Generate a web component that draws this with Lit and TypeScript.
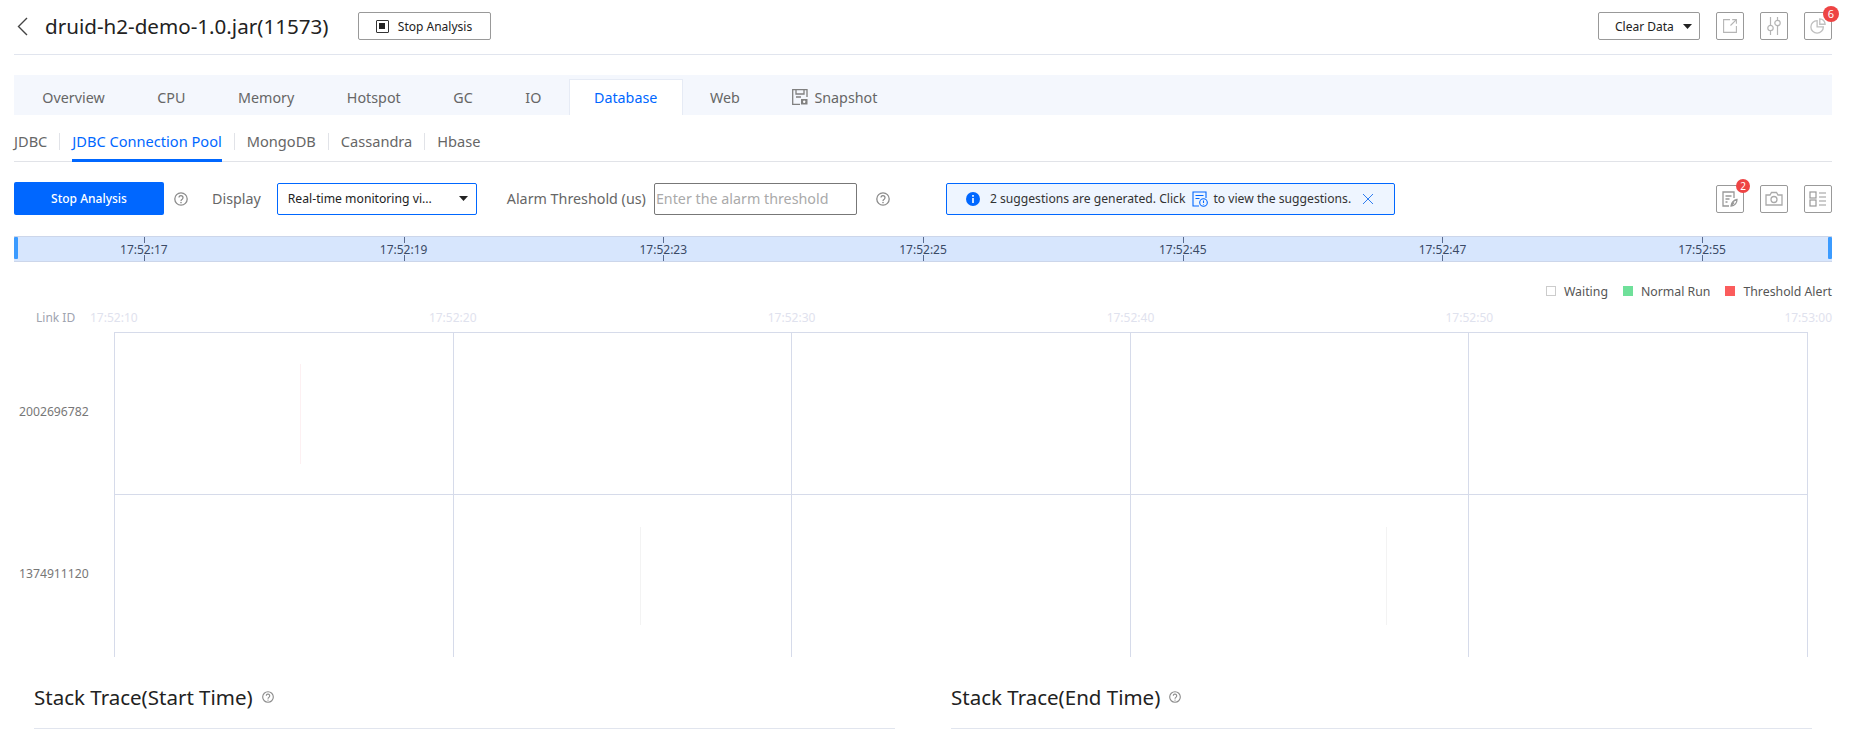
import { LitElement, html, css } from 'lit';
import { customElement } from 'lit/decorators.js';

const helpIcon = (size: number) => html`<svg class="help" width=${size} height=${size} viewBox="0 0 14 14" fill="none" stroke="#8c8c8c">
  <circle cx="7" cy="7" r="6.2" stroke-width="1.3"></circle>
  <path d="M5 5.6a2 2 0 1 1 3.2 1.6c-.8.5-1.2.9-1.2 1.7" stroke-width="1.3"></path>
  <circle cx="7" cy="10.6" r=".8" fill="#8c8c8c" stroke="none"></circle>
</svg>`;

const caret = html`<svg width="9" height="5" viewBox="0 0 9 5"><path d="M0 0h9L4.500 5z" fill="#222"></path></svg>`;

// chart data: faint marks in the swimlanes, in px from the left of the cell
const rows = [
  { id: '2002696782', marks: [{ cell: 0, left: 185, top: 31, height: 100, color: '#fdf0f2' }] },
  {
    id: '1374911120',
    marks: [
      { cell: 1, left: 186, top: 32, height: 98, color: '#f3f3f3' },
      { cell: 3, left: 255, top: 32, height: 98, color: '#f3f3f3' },
    ],
  },
];

const tabs = ['Overview', 'CPU', 'Memory', 'Hotspot', 'GC', 'IO', 'Database', 'Web'];
const subTabs = ['JDBC', 'JDBC Connection Pool', 'MongoDB', 'Cassandra', 'Hbase'];
const slices = ['17:52:17', '17:52:19', '17:52:23', '17:52:25', '17:52:45', '17:52:47', '17:52:55'];
const axis = ['17:52:10', '17:52:20', '17:52:30', '17:52:40', '17:52:50', '17:53:00'];

@customElement('app-root')
export class AppRoot extends LitElement {
  static styles = css`
    :host {
      display: block;
      width: 1857px;
      height: 735px;
      overflow: hidden;
      box-sizing: border-box;
      padding: 0 25px 0 14px;
      background: #fff;
      font-family: 'Noto Sans', 'Noto Sans CJK SC', sans-serif;
      color: #555;
    }
    svg {
      display: block;
      flex: none;
    }
    .header {
      display: flex;
      align-items: center;
      box-sizing: border-box;
      height: 55px;
      padding-bottom: 2px;
      border-bottom: 1px solid #e1e5ee;
    }
    .back {
      margin-left: 3px;
      margin-right: 17px;
    }
    .title {
      font-size: 20.6px;
      color: #222;
      margin-right: 29px;
      white-space: nowrap;
    }
    .btn {
      display: flex;
      align-items: center;
      justify-content: center;
      box-sizing: border-box;
      height: 28px;
      border: 1px solid #999;
      border-radius: 2px;
      font-size: 12px;
      color: #222;
      background: #fff;
    }
    .stop {
      width: 133px;
      gap: 9px;
    }
    .stop-box {
      width: 13px;
      height: 13px;
      border: 1px solid #333;
      box-sizing: border-box;
      display: flex;
      align-items: center;
      justify-content: center;
      border-radius: 1px;
    }
    .stop-box i {
      width: 6px;
      height: 6px;
      background: #222;
    }
    .spacer {
      flex: 1;
    }
    .clear {
      width: 102px;
      gap: 9px;
      padding-left: 16px;
      justify-content: flex-start;
    }
    .icon-btn {
      position: relative;
      width: 28px;
      height: 28px;
      margin-left: 16px;
    }
    .badge {
      position: absolute;
      top: -7px;
      right: -8px;
      width: 16px;
      height: 16px;
      border-radius: 50%;
      background: #ee4444;
      color: #fff;
      font-size: 11px;
      line-height: 16px;
      text-align: center;
    }
    .badge.small {
      width: 14px;
      height: 14px;
      line-height: 14px;
      font-size: 10px;
      top: -7px;
      right: -7px;
    }
    .tabs {
      display: flex;
      height: 40px;
      margin-top: 20px;
      padding-left: 2px;
      background: #f4f7fd;
      font-size: 14.3px;
      color: #666;
    }
    .tab {
      display: flex;
      align-items: center;
      gap: 6px;
      padding: 0 26.3px;
      margin-top: 4px;
      height: 36px;
      box-sizing: border-box;
    }
    .tab.active {
      background: #fff;
      color: #0067ff;
      padding: 0 24.3px;
      margin: 4px 1px 0;
      border: 1px solid #e6ebf5;
      border-bottom: none;
    }
    .subtabs {
      display: flex;
      align-items: stretch;
      box-sizing: border-box;
      height: 47px;
      border-bottom: 1px solid #e1e3e8;
      font-size: 14.6px;
      color: #666;
    }
    .subtab {
      display: flex;
      align-items: center;
      position: relative;
      margin-right: 25px;
      margin-bottom: -1px;
      border-bottom: 3px solid transparent;
      padding-top: 7px;
    }
    .subtab.active {
      color: #0067ff;
      border-bottom-color: #0067ff;
    }
    .subtab:not(:last-child)::after {
      content: '';
      position: absolute;
      right: -13px;
      top: 18px;
      height: 17px;
      width: 1px;
      background: #e1e3e8;
    }
    .toolbar {
      display: flex;
      align-items: center;
      height: 33px;
      margin-top: 20px;
      font-size: 14.3px;
      color: #666;
    }
    .primary {
      width: 150px;
      height: 33px;
      border: none;
      background: #0067ff;
      color: #fff;
      font-weight: 500;
      border-radius: 2px;
    }
    .toolbar .help {
      margin-left: 10px;
    }
    .display-label {
      margin-left: 24px;
      margin-right: 16px;
    }
    .select {
      display: flex;
      align-items: center;
      justify-content: space-between;
      box-sizing: border-box;
      width: 200px;
      height: 32px;
      padding: 0 8px 0 10px;
      border: 1px solid #0067ff;
      border-radius: 2px;
      font-size: 12.2px;
      color: #222;
    }
    .alarm-label {
      margin-left: 30px;
      margin-right: 8px;
      white-space: nowrap;
    }
    .input {
      box-sizing: border-box;
      width: 203px;
      height: 32px;
      padding-left: 1px;
      border: 1px solid #777;
      border-radius: 2px;
      line-height: 30px;
      color: #aaa;
      white-space: nowrap;
    }
    .toolbar .input + .help {
      margin-left: 19px;
    }
    .notice {
      display: flex;
      align-items: center;
      box-sizing: border-box;
      width: 449px;
      height: 32px;
      margin-left: 56px;
      padding-left: 19px;
      border: 1px solid #0067ff;
      border-radius: 2px;
      background: #eef5ff;
      font-size: 12.15px;
      color: #333;
      white-space: nowrap;
    }
    .notice .info {
      margin-right: 10px;
    }
    .notice .doc {
      margin: 0 5px 0 7px;
    }
    .notice .close {
      margin-left: 11px;
    }
    .timeline {
      display: flex;
      height: 26px;
      margin-top: 21px;
      position: relative;
      box-sizing: border-box;
      background: #d7e6fd;
      border-top: 1px solid #ccd6ea;
      border-bottom: 1px solid #ccd6ea;
      font-size: 12px;
      color: #3a4a66;
    }
    .slice {
      flex: 1;
      display: flex;
      align-items: center;
      justify-content: center;
      position: relative;
    }
    .slice::before,
    .slice::after {
      content: '';
      position: absolute;
      left: 50%;
      width: 1px;
      height: 6px;
      background: #5a6b8f;
    }
    .slice::before {
      top: 0;
    }
    .slice::after {
      bottom: 0;
    }
    .handle {
      position: absolute;
      top: 0;
      width: 4px;
      height: 22px;
      background: #3b9bff;
      border-radius: 1px;
    }
    .handle.left {
      left: 0;
    }
    .handle.right {
      right: 0;
    }
    .legend {
      display: flex;
      justify-content: flex-end;
      align-items: center;
      height: 18px;
      margin-top: 20px;
      font-size: 12.3px;
      color: #555;
    }
    .legend-item {
      display: flex;
      align-items: center;
      gap: 8px;
      margin-left: 15px;
    }
    .swatch {
      width: 10px;
      height: 10px;
      box-sizing: border-box;
    }
    .swatch.wait {
      border: 1px solid #ccc;
      background: #fff;
    }
    .swatch.run {
      background: #6fe09a;
    }
    .swatch.alert {
      background: #fb5c5c;
    }
    .axis {
      display: flex;
      align-items: center;
      height: 20px;
      margin-top: 7px;
      margin-bottom: 5px;
      font-size: 12px;
    }
    .link-id {
      width: 76px;
      box-sizing: border-box;
      padding-left: 22px;
      color: #a0a4b0;
      white-space: nowrap;
    }
    .axis-labels {
      flex: 1;
      display: flex;
      justify-content: space-between;
      color: #dfe2ee;
    }
    .row {
      display: flex;
      height: 162px;
      font-size: 12.2px;
      color: #777;
    }
    .row.last {
      height: 163px;
    }
    .row-label {
      width: 100px;
      box-sizing: border-box;
      padding: 0 0 4px 5px;
      align-self: center;
    }
    .cells {
      flex: 1;
      display: grid;
      grid-template-columns: repeat(5, 1fr);
      margin-right: 24px;
      border-top: 1px solid #d6dbea;
      border-right: 1px solid #d6dbea;
    }
    .cell {
      position: relative;
      border-left: 1px solid #d6dbea;
    }
    .mark {
      position: absolute;
      width: 1px;
    }
    .stacks {
      display: flex;
      gap: 56px;
      padding: 0 20px;
      margin-top: 20px;
    }
    .stack {
      flex: 1;
      display: flex;
      align-items: center;
      gap: 9px;
      box-sizing: border-box;
      height: 52px;
      padding-bottom: 12px;
      border-bottom: 1px solid #e1e5ee;
      font-size: 20.5px;
      color: #222;
    }
  `;

  render() {
    return html`
      <div class="header">
        <svg class="back" width="11" height="19" viewBox="0 0 11 19" fill="none" stroke="#444" stroke-width="1.4"><path d="M10 1 1.5 9.5 10 18"></path></svg>
        <span class="title">druid-h2-demo-1.0.jar(11573)</span>
        <div class="btn stop"><span class="stop-box"><i></i></span>Stop Analysis</div>
        <div class="spacer"></div>
        <div class="btn clear">Clear Data ${caret}</div>
        <div class="btn icon-btn">
          <svg width="14" height="14" viewBox="0 0 14 14" fill="none" stroke="#b5b5b5" stroke-width="1.1"><path d="M7 .6H.6v12.800h12.800V7M7.500 6.500l5.900-5.900M9.200.6h4.200v4.200"></path></svg>
        </div>
        <div class="btn icon-btn">
          <svg width="14" height="18" viewBox="0 0 14 18" fill="none" stroke="#b5b5b5" stroke-width="1.2"><circle cx="3.500" cy="11" r="2.700"></circle><circle cx="10.500" cy="6" r="2.700"></circle><path d="M3.500 0v8.300M3.500 13.700V18M10.500 0v3.300M10.500 8.700V18"></path></svg>
        </div>
        <div class="btn icon-btn">
          <svg width="16" height="16" viewBox="0 0 18 18" fill="none" stroke="#c0c0c0" stroke-width="1.5"><path d="M8 3a7 7 0 1 0 7 7H8z"></path><path d="M11 1a6 6 0 0 1 6 6h-6z"></path></svg>
          <span class="badge">6</span>
        </div>
      </div>

      <div class="tabs">
        ${tabs.map((t) => html`<div class="tab ${t === 'Database' ? 'active' : ''}">${t}</div>`)}
        <div class="tab">
          <svg width="16" height="16" viewBox="0 0 16 16" fill="none" stroke="#808080" stroke-width="1.300"><path d="M15 8V.7H.7v14.600h7.300"></path><path d="M4 1v4h8V1M4 8h5"></path><rect x="9" y="10" width="6.500" height="5.500" fill="#808080" stroke="none"></rect><circle cx="12.200" cy="12.700" r="1.200" fill="#fff" stroke="none"></circle></svg>
          Snapshot
        </div>
      </div>

      <div class="subtabs">
        ${subTabs.map((t) => html`<div class="subtab ${t === 'JDBC Connection Pool' ? 'active' : ''}">${t}</div>`)}
      </div>

      <div class="toolbar">
        <div class="btn primary">Stop Analysis</div>
        ${helpIcon(14)}
        <span class="display-label">Display</span>
        <div class="select"><span>Real-time monitoring vi...</span>${caret}</div>
        <span class="alarm-label">Alarm Threshold (us)</span>
        <div class="input">Enter the alarm threshold</div>
        ${helpIcon(14)}
        <div class="notice">
          <svg class="info" width="14" height="14" viewBox="0 0 14 14"><circle cx="7" cy="7" r="7" fill="#0067ff"></circle><rect x="6.200" y="6" width="1.600" height="5" fill="#fff"></rect><rect x="6.200" y="3" width="1.600" height="1.800" fill="#fff"></rect></svg>
          2 suggestions are generated. Click
          <svg class="doc" width="16" height="16" viewBox="0 0 16 16" fill="none" stroke="#0067ff" stroke-width="1.100"><path d="M7 15H1V1h13v6"></path><path d="M3.500 4.500h8M3.500 7.500h4"></path><circle cx="11.500" cy="11.500" r="3.800"></circle><path d="M11.500 9.500v2.500M11.500 13v.6"></path></svg>
          to view the suggestions.
          <svg class="close" width="12" height="12" viewBox="0 0 12 12" fill="none" stroke="#2f7df0" stroke-width="1"><path d="M1 1l10 10M11 1 1 11"></path></svg>
        </div>
        <div class="spacer"></div>
        <div class="btn icon-btn">
          <svg width="18" height="18" viewBox="0 0 18 18" fill="none" stroke="#999" stroke-width="1.300"><path d="M8 16H2V2h11v6"></path><path d="M4.500 6h6M4.500 9h4M4.500 12h2"></path><path d="M10 16c0-3 3-6 6-6.500 0 3-2 6.500-6 6.500zM10 16l3-3.500"></path></svg>
          <span class="badge small">2</span>
        </div>
        <div class="btn icon-btn">
          <svg width="18" height="16" viewBox="0 0 18 16" fill="none" stroke="#aaa" stroke-width="1.300"><path d="M1 4h4l1.500-2.500h5L13 4h4v10H1z"></path><circle cx="9" cy="8.500" r="3"></circle></svg>
        </div>
        <div class="btn icon-btn">
          <svg width="18" height="18" viewBox="0 0 18 18" fill="none" stroke="#999" stroke-width="1.200"><rect x="1" y="2" width="6" height="6"></rect><rect x="1" y="10" width="6" height="6"></rect><path d="M10 3h7M10 7h7M10 11h7M10 15h7"></path></svg>
        </div>
      </div>

      <div class="timeline">
        <span class="handle left"></span>
        ${slices.map((s) => html`<div class="slice">${s}</div>`)}
        <span class="handle right"></span>
      </div>

      <div class="legend">
        <div class="legend-item"><span class="swatch wait"></span>Waiting</div>
        <div class="legend-item"><span class="swatch run"></span>Normal Run</div>
        <div class="legend-item"><span class="swatch alert"></span>Threshold Alert</div>
      </div>

      <div class="axis">
        <span class="link-id">Link ID</span>
        <div class="axis-labels">${axis.map((a) => html`<span>${a}</span>`)}</div>
      </div>

      ${rows.map(
        (r, i) => html`<div class="row ${i === rows.length - 1 ? 'last' : ''}">
          <div class="row-label">${r.id}</div>
          <div class="cells">
            ${[0, 1, 2, 3, 4].map(
              (c) => html`<div class="cell">
                ${r.marks
                  .filter((m) => m.cell === c)
                  .map((m) => html`<span class="mark" style="left:${m.left}px;top:${m.top}px;height:${m.height}px;background:${m.color}"></span>`)}
              </div>`,
            )}
          </div>
        </div>`,
      )}

      <div class="stacks">
        <div class="stack">Stack Trace(Start Time) ${helpIcon(12)}</div>
        <div class="stack">Stack Trace(End Time) ${helpIcon(12)}</div>
      </div>
    `;
  }
}
